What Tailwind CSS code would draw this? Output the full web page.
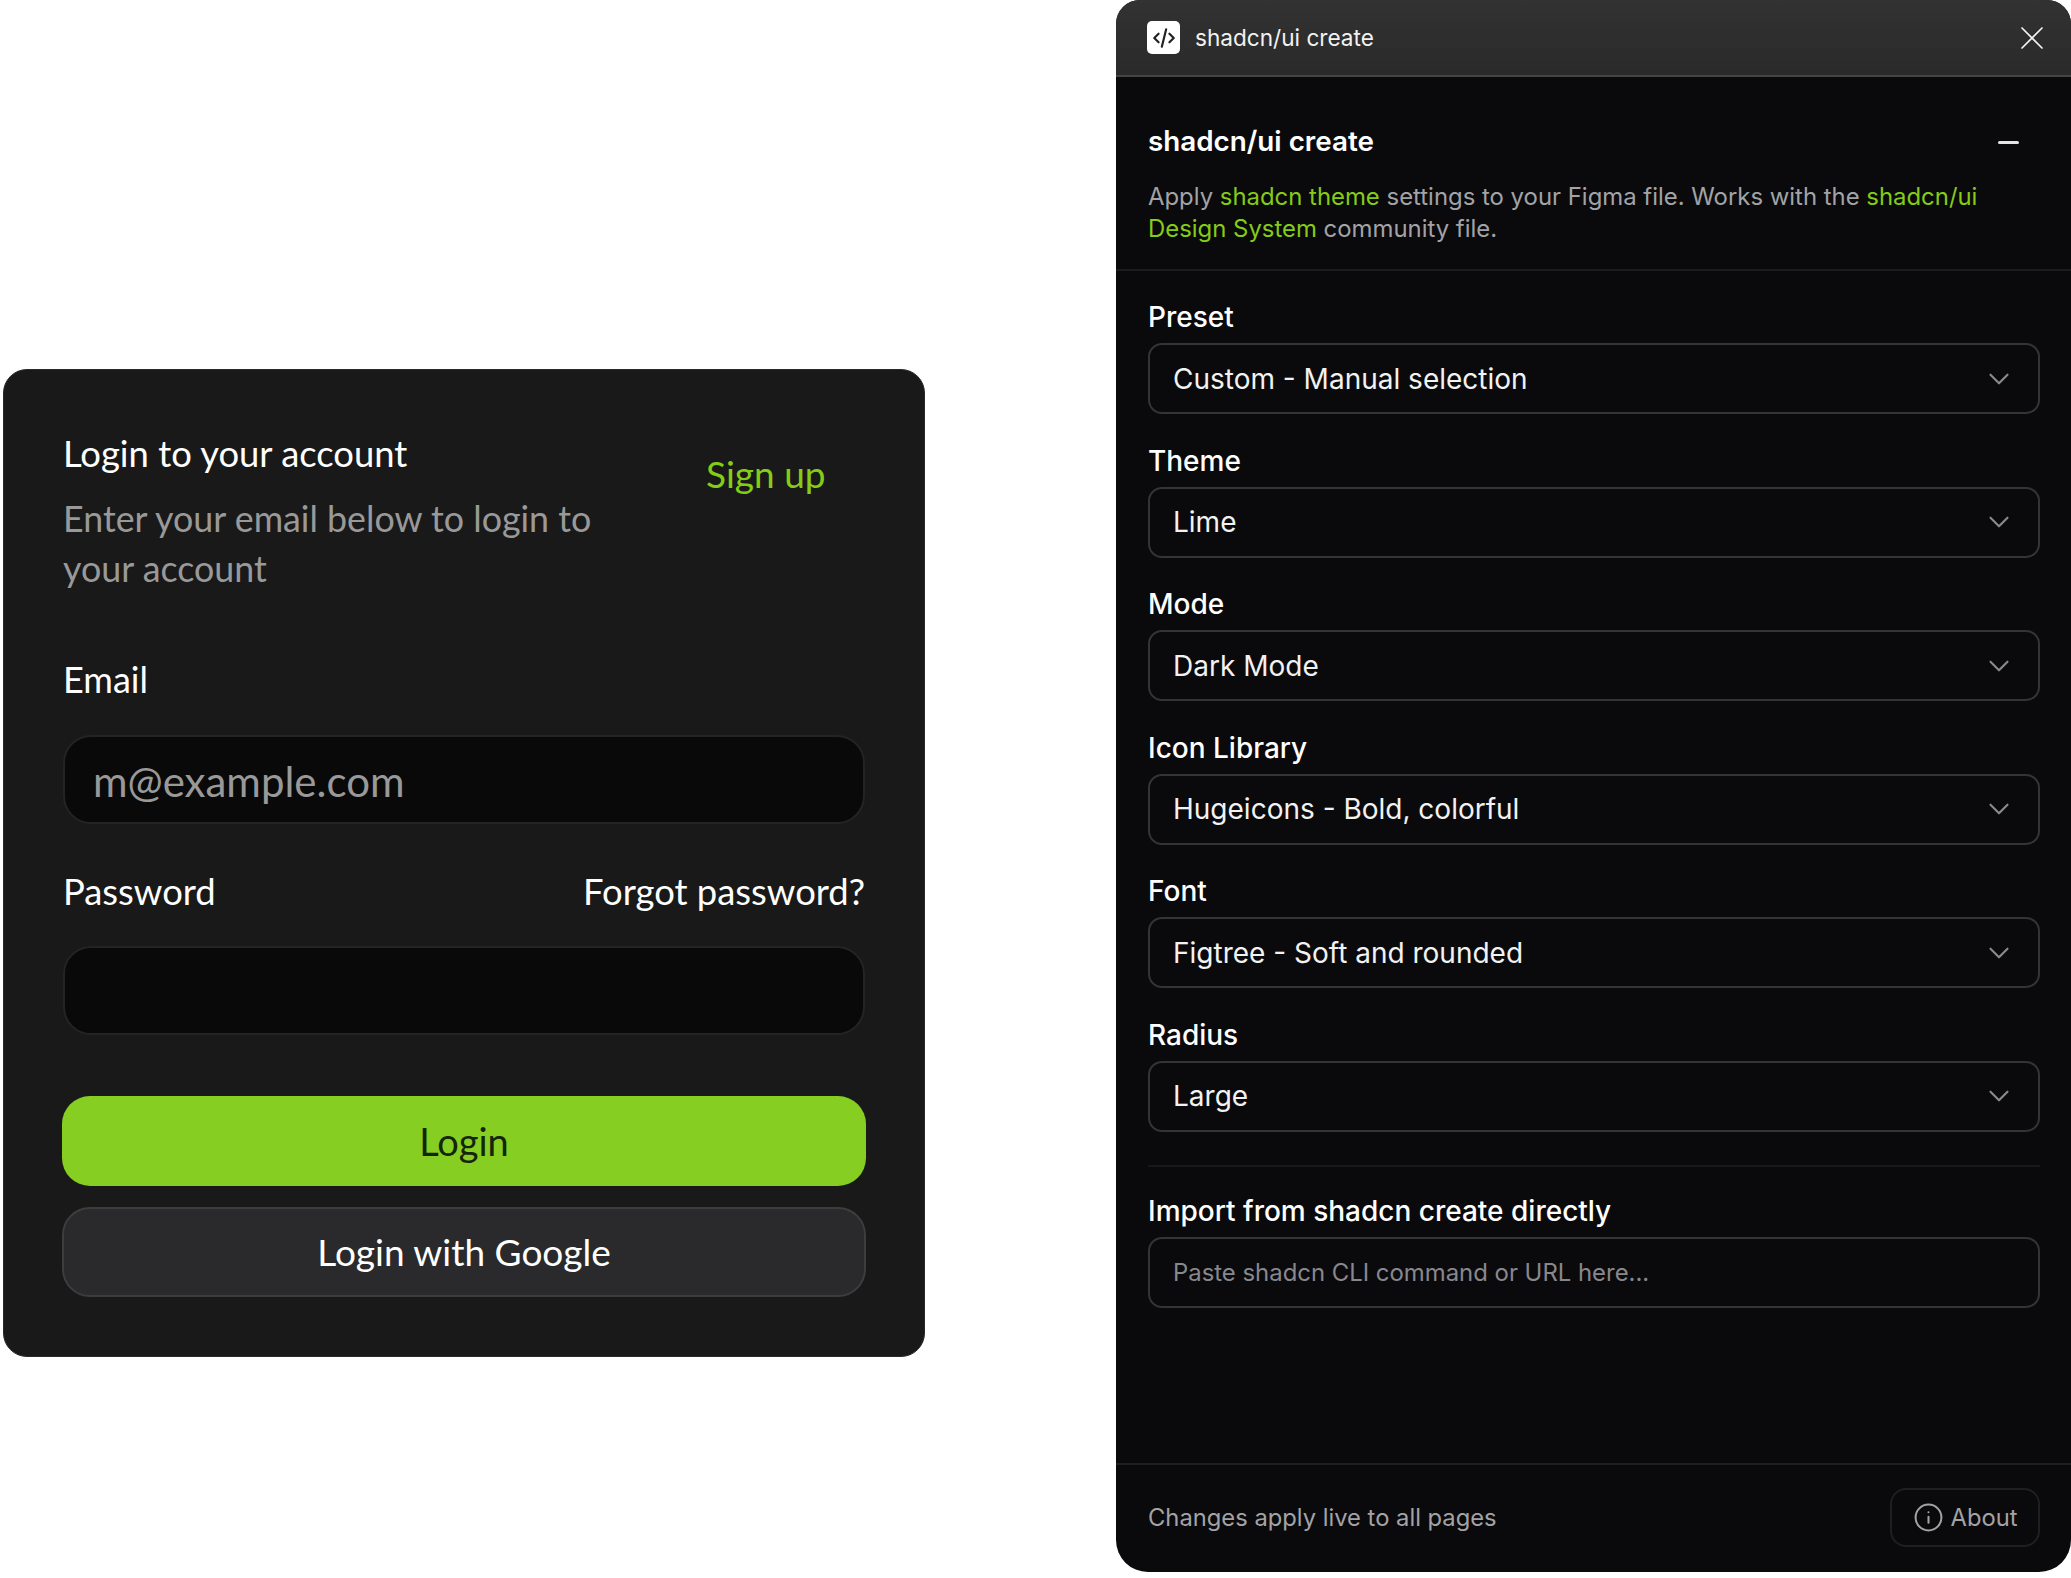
<!DOCTYPE html>
<html lang="en">
<head>
    <meta charset="UTF-8">
    <title>shadcn/ui create</title>
    <script src="https://cdn.jsdelivr.net/npm/@tailwindcss/browser@4"></script>
</head>
<body class="bg-white">
    <div class="flex items-start h-[1578px] w-[2071px] overflow-hidden">

        <!-- login card -->
        <div class="ml-[3px] mt-[369px] w-[922px] h-[988px] shrink-0 rounded-[24px] bg-[#191919] border border-[#2a2a2a] px-[59px] pt-[58px] font-['Lato',sans-serif]">
            <div class="flex items-start">
                <div class="w-[600px]">
                    <h2 class="text-[36.4px] leading-[50px] text-white">Login to your account</h2>
                    <p class="mt-[16px] w-[560px] text-[35.8px] leading-[50px] text-[#999]">Enter your email below to login to your account</p>
                </div>
                <a class="ml-[43px] mt-[21px] text-[37px] leading-[50px] text-[#84cc16]">Sign up</a>
            </div>
            <div class="mt-[60px] text-[36px] leading-[50px] text-white">Email</div>
            <div class="mt-[31px] h-[89px] rounded-[28px] bg-[#090909] border-2 border-[#242424] flex items-center px-[28px] pt-[3px] text-[42px] text-[#999]">m@example.com</div>
            <div class="mt-[42px] flex justify-between text-[36.4px] leading-[50px] text-white">
                <span>Password</span>
                <span>Forgot password?</span>
            </div>
            <div class="mt-[30px] h-[89px] rounded-[28px] bg-[#090909] border-2 border-[#242424]"></div>
            <button class="mt-[61px] block w-[804px] -mx-[1px] h-[90px] rounded-[28px] bg-[#86cf22] text-[38px] text-[#15250a]">Login</button>
            <button class="mt-[21px] block w-[804px] -mx-[1px] h-[90px] rounded-[28px] bg-[#2a2a2c] border-2 border-[#3d3d3d] text-[37px] text-white">Login with Google</button>
        </div>

        <!-- plugin panel -->
        <div class="ml-[191px] w-[955px] h-[1572px] shrink-0 rounded-t-[24px] rounded-b-[32px] overflow-hidden bg-[#0a0a0c] flex flex-col font-['Inter',sans-serif]">
            <div class="h-[77px] shrink-0 flex items-center pl-[31px] pr-[27px] bg-gradient-to-b from-[#323232] to-[#2a2a2a] border-b-2 border-[#444]">
                <div class="w-[33px] h-[33px] rounded-[5px] bg-white flex items-center justify-center">
                    <svg class="w-[26px] h-[26px]" viewBox="0 0 24 24" fill="none" stroke="#222" stroke-width="2" stroke-linecap="round" stroke-linejoin="round"><path d="m7 8-4 4 4 4"/><path d="m17 8 4 4-4 4"/><path d="m14 4-4 16"/></svg>
                </div>
                <span class="ml-[15px] pt-[1px] text-[22.6px] text-[#f2f2f2]">shadcn/ui create</span>
                <svg class="ml-auto w-[24px] h-[24px]" viewBox="0 0 24 24" fill="none" stroke="#f2f2f2" stroke-width="1.7" stroke-linecap="round"><path d="M2 2l20 20M22 2 2 22"/></svg>
            </div>

            <div class="h-[194px] shrink-0 pl-[32px] pr-[30px] pt-[49px] border-b-2 border-[#1c1c1e]">
                <div class="flex items-center justify-between h-[32px]">
                    <h1 class="text-[27.8px] font-semibold text-white">shadcn/ui create</h1>
                    <div class="w-[21px] h-[3px] rounded-full bg-[#e5e5e5] mr-[22px]"></div>
                </div>
                <p class="mt-[23px] text-[23.9px] leading-[32px] text-[#a3a3a6]">Apply <span class="text-[#84cc16]">shadcn theme</span> settings to your Figma file. Works with the <span class="text-[#84cc16]">shadcn/ui Design System</span> community file.</p>
            </div>

            <div class="pl-[32px] pr-[31px] pt-[28px] flex-1 flex flex-col">
                <div class="h-[143.6px]">
                    <div class="text-[28px] leading-[36px] font-medium text-white">Preset</div>
                    <div class="mt-[8px] h-[71px] rounded-[14px] border-2 border-[#343437] flex items-center justify-between pl-[23px] pr-[22px] text-[28px] text-[#f2f2f2]">
                        <span>Custom - Manual selection</span>
                        <svg class="w-[34px] h-[34px]" viewBox="0 0 24 24" fill="none" stroke="#8a8a8a" stroke-width="1.5" stroke-linecap="round" stroke-linejoin="round"><path d="m6 9 6 6 6-6"/></svg>
                    </div>
                </div>
                <div class="h-[143.6px]">
                    <div class="text-[28px] leading-[36px] font-medium text-white">Theme</div>
                    <div class="mt-[8px] h-[71px] rounded-[14px] border-2 border-[#343437] flex items-center justify-between pl-[23px] pr-[22px] text-[28px] text-[#f2f2f2]">
                        <span>Lime</span>
                        <svg class="w-[34px] h-[34px]" viewBox="0 0 24 24" fill="none" stroke="#8a8a8a" stroke-width="1.5" stroke-linecap="round" stroke-linejoin="round"><path d="m6 9 6 6 6-6"/></svg>
                    </div>
                </div>
                <div class="h-[143.6px]">
                    <div class="text-[28px] leading-[36px] font-medium text-white">Mode</div>
                    <div class="mt-[8px] h-[71px] rounded-[14px] border-2 border-[#343437] flex items-center justify-between pl-[23px] pr-[22px] text-[28px] text-[#f2f2f2]">
                        <span>Dark Mode</span>
                        <svg class="w-[34px] h-[34px]" viewBox="0 0 24 24" fill="none" stroke="#8a8a8a" stroke-width="1.5" stroke-linecap="round" stroke-linejoin="round"><path d="m6 9 6 6 6-6"/></svg>
                    </div>
                </div>
                <div class="h-[143.6px]">
                    <div class="text-[28px] leading-[36px] font-medium text-white">Icon Library</div>
                    <div class="mt-[8px] h-[71px] rounded-[14px] border-2 border-[#343437] flex items-center justify-between pl-[23px] pr-[22px] text-[28px] text-[#f2f2f2]">
                        <span>Hugeicons - Bold, colorful</span>
                        <svg class="w-[34px] h-[34px]" viewBox="0 0 24 24" fill="none" stroke="#8a8a8a" stroke-width="1.5" stroke-linecap="round" stroke-linejoin="round"><path d="m6 9 6 6 6-6"/></svg>
                    </div>
                </div>
                <div class="h-[143.6px]">
                    <div class="text-[28px] leading-[36px] font-medium text-white">Font</div>
                    <div class="mt-[8px] h-[71px] rounded-[14px] border-2 border-[#343437] flex items-center justify-between pl-[23px] pr-[22px] text-[28px] text-[#f2f2f2]">
                        <span>Figtree - Soft and rounded</span>
                        <svg class="w-[34px] h-[34px]" viewBox="0 0 24 24" fill="none" stroke="#8a8a8a" stroke-width="1.5" stroke-linecap="round" stroke-linejoin="round"><path d="m6 9 6 6 6-6"/></svg>
                    </div>
                </div>
                <div class="h-[150px] border-b-2 border-[#18181a]">
                    <div class="text-[28px] leading-[36px] font-medium text-white">Radius</div>
                    <div class="mt-[8px] h-[71px] rounded-[14px] border-2 border-[#343437] flex items-center justify-between pl-[23px] pr-[22px] text-[28px] text-[#f2f2f2]">
                        <span>Large</span>
                        <svg class="w-[34px] h-[34px]" viewBox="0 0 24 24" fill="none" stroke="#8a8a8a" stroke-width="1.5" stroke-linecap="round" stroke-linejoin="round"><path d="m6 9 6 6 6-6"/></svg>
                    </div>
                </div>
                <div class="mt-[26px] text-[28px] leading-[36px] font-medium text-white">Import from shadcn create directly</div>
                <div class="mt-[8px] h-[71px] rounded-[14px] border-2 border-[#343437] flex items-center pl-[23px] text-[23.9px] text-[#88888c]">Paste shadcn CLI command or URL here...</div>
            </div>

            <div class="h-[109px] shrink-0 border-t-2 border-[#1f1f21] flex items-center justify-between pl-[32px] pr-[31px] pb-[2px] text-[23.75px] text-[#a3a3a6]">
                <span>Changes apply live to all pages</span>
                <div class="w-[150px] h-[59px] rounded-[16px] border-2 border-[#1f1f21] flex items-center justify-center gap-[7px]">
                    <svg class="w-[31px] h-[31px]" viewBox="0 0 24 24" fill="none" stroke="#a3a3a6" stroke-width="1.6" stroke-linecap="round"><circle cx="12" cy="12" r="10"/><path d="M12 16v-4.5M12 8h.01"/></svg>
                    <span>About</span>
                </div>
            </div>
        </div>
    </div>
</body>
</html>
